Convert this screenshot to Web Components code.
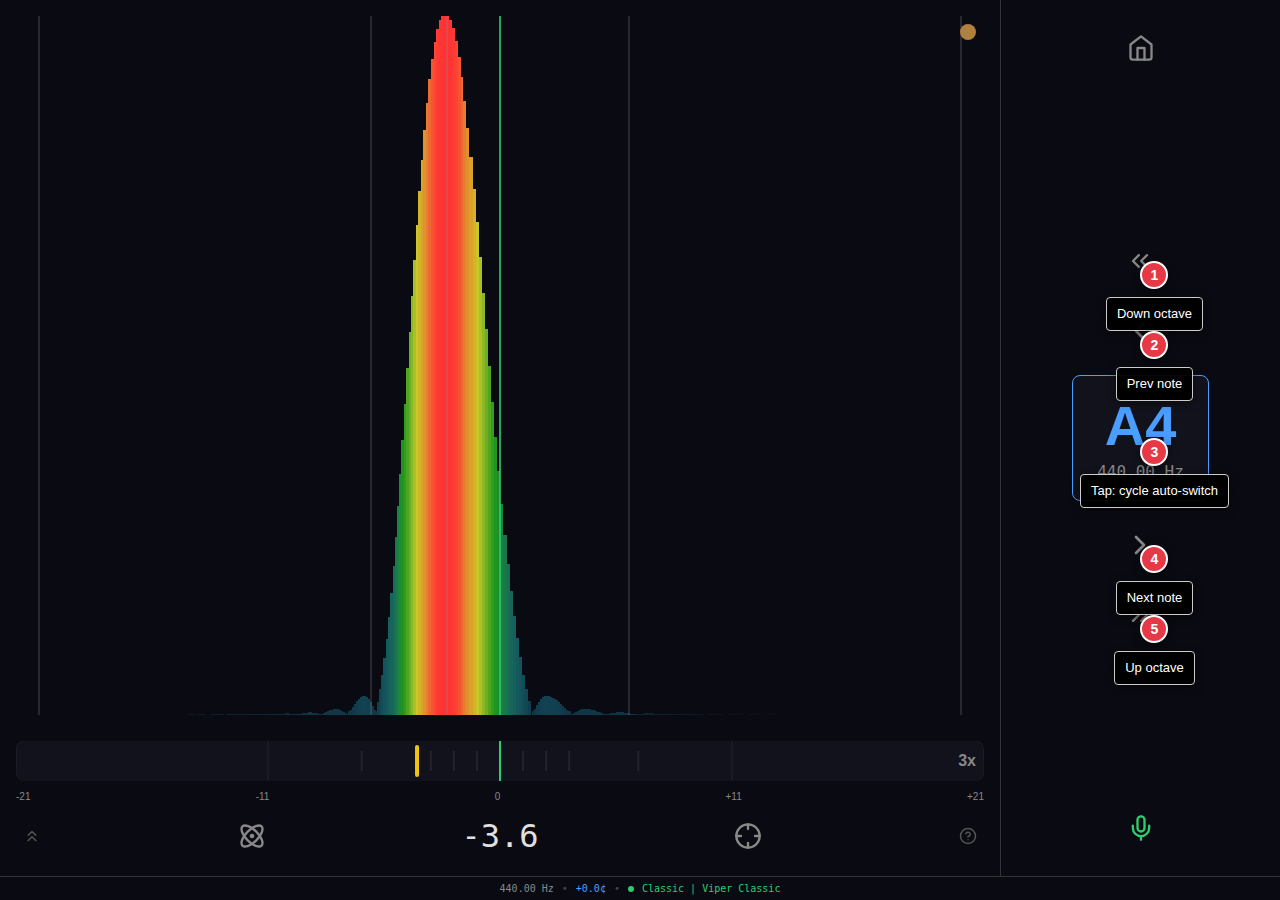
<!DOCTYPE html>
<html lang="en">
<head>
<meta charset="utf-8">
<meta name="viewport" content="width=device-width, initial-scale=1">
<title>Tuner</title>
<style>
  html, body { margin: 0; height: 100%; background: #0a0a12; }
  body { font-family: "Liberation Sans", Arial, sans-serif; color: #888; }
</style>
</head>
<body>
<tuner-app></tuner-app>

<script>
const define = (name, html, setup) => {
  const template = document.createElement('template');
  template.innerHTML = html;
  customElements.define(name, class extends HTMLElement {
    connectedCallback() {
      if (this.shadowRoot) return;
      const root = this.attachShadow({ mode: 'open' });
      root.append(template.content.cloneNode(true));
      if (setup) setup(this, root);
    }
  });
};

/* ---------- icons ---------- */
const ICONS = {
  home: '<path d="m3 9 9-7 9 7v11a2 2 0 0 1-2 2H5a2 2 0 0 1-2-2z"/><path d="M9 22V12h6v10"/>',
  mic: '<path d="M12 2a3 3 0 0 0-3 3v7a3 3 0 0 0 6 0V5a3 3 0 0 0-3-3Z"/><path d="M19 10v2a7 7 0 0 1-14 0v-2"/><path d="M12 19v3"/>',
  'chevron-left': '<path d="m15 18-6-6 6-6"/>',
  'chevron-right': '<path d="m9 18 6-6-6-6"/>',
  'chevrons-left': '<path d="m11 17-5-5 5-5"/><path d="m18 17-5-5 5-5"/>',
  'chevrons-right': '<path d="m6 17 5-5-5-5"/><path d="m13 17 5-5-5-5"/>',
  'chevrons-up': '<path d="m17 11-5-5-5 5"/><path d="m17 18-5-5-5 5"/>',
  atom: '<circle cx="12" cy="12" r="1"/><path d="M20.2 20.2c2.04-2.03.02-7.36-4.5-11.9-4.54-4.52-9.87-6.54-11.9-4.5-2.04 2.03-.02 7.36 4.5 11.9 4.54 4.52 9.87 6.54 11.9 4.5Z"/><path d="M15.7 15.7c4.52-4.54 6.54-9.87 4.5-11.9-2.03-2.04-7.36-.02-11.9 4.5-4.52 4.54-6.54 9.87-4.5 11.9 2.03 2.04 7.36.02 11.9-4.5Z"/>',
  crosshair: '<circle cx="12" cy="12" r="10"/><path d="M22 12h-4M6 12H2M12 6V2M12 22v-4"/>',
  help: '<circle cx="12" cy="12" r="10"/><path d="M9.09 9a3 3 0 0 1 5.83 1c0 2-3 3-3 3"/><path d="M12 17h.01"/>'
};

/* ---------- icon button: icon, size, label ---------- */
define('icon-button', `
  <style>
    :host { display: block; flex: none; width: var(--box, 56px); height: var(--box, 56px); }
    button { display: grid; place-items: center; width: 100%; height: 100%; margin: 0; padding: 0;
             border: 0; background: none; color: inherit; cursor: pointer; }
    svg { display: block; fill: none; stroke: currentColor; stroke-width: 2;
          stroke-linecap: round; stroke-linejoin: round; }
  </style>
  <button type="button"></button>`,
  (host, root) => {
    const size = host.getAttribute('size') || 28;
    const button = root.querySelector('button');
    button.setAttribute('aria-label', host.getAttribute('label'));
    button.innerHTML = `<svg viewBox="0 0 24 24" width="${size}" height="${size}" aria-hidden="true">${ICONS[host.getAttribute('icon')]}</svg>`;
  });

/* ---------- numbered help mark, anchored on the control it wraps ---------- */
define('help-mark', `
  <style>
    :host { display: block; position: relative; }
    .mark { position: absolute; left: 50%; top: 50%; width: 28px; margin: 0; pointer-events: none;
            display: flex; flex-direction: column; align-items: center; gap: 8px; z-index: 1; }
    .num { box-sizing: border-box; width: 28px; height: 28px; border: 2px solid #fff; border-radius: 50%;
           background: #e63946; color: #fff; font-weight: bold; font-size: 14px; line-height: 24px;
           text-align: center; box-shadow: 0 2px 8px rgba(0,0,0,.5); }
    .tip { padding: 8px 10px; border: 1px solid #ccc; border-radius: 4px; background: rgba(0,0,0,.95);
           color: #fff; font-size: 13px; line-height: 16px; white-space: nowrap;
           box-shadow: 0 2px 8px rgba(0,0,0,.5); }
  </style>
  <slot></slot>
  <div class="mark"><span class="num"></span><span class="tip"></span></div>`,
  (host, root) => {
    root.querySelector('.num').textContent = host.getAttribute('number');
    root.querySelector('.tip').textContent = host.getAttribute('text');
  });

/* ---------- spectrum ---------- */
const BASE = 699;
/* [edge x, bar top], from the outside in towards the peak */
const LEFT = [[361,702],[363,689],[365,675],[367,658],[370,639],[372,617],[374,593],[377,566],[379,537],
  [381,506],[383,474],[385,440],[388,404],[390,368],[393,332],[395,296],[397,260],[400,225],[402,191],
  [405,160],[407,130],[410,103],[412,79],[415,59],[418,42],[420,29],[423,20],[425,16]];
const RIGHT = [[515,701],[512,689],[509,675],[506,657],[503,638],[500,616],[497,591],[494,564],[491,535],
  [487,504],[484,471],[481,437],[478,402],[475,366],[472,329],[469,293],[466,257],[463,222],[460,189],
  [457,157],[453,128],[450,101],[447,77],[445,57],[442,41],[439,28],[436,20],[433,16]];
/* side lobes: start, end, top of the lobe, height */
const LOBES = [[171,178,174,1],[180,190,185,1],[194,208,200,1],[210,226,218,1],[226,244,235,1],[244,257,250,1.2],
  [257,280,272,1.6],[280,305,295,2.6],[305,332,320,6],[332,361,349,19],
  [516,555,530,19],[555,590,569,6],[590,620,603,2.8],[620,646,634,1.8],[646,668,656,1.2],
  [668,688,680,1],[692,708,699,1],[712,726,720,1],[732,742,737,1],[750,758,755,1]];
const STOPS = [[0,16,50,68],[.03,17,68,82],[.1,20,88,94],[.2,24,105,88],[.3,28,130,65],[.35,28,143,45],
  [.4,30,150,30],[.45,52,157,30],[.55,108,175,36],[.7,200,200,40],[.75,212,180,42],[.84,224,145,44],
  [.88,230,125,48],[.94,245,85,50],[.98,255,58,51],[1,255,51,51]];
const heat = h => {
  let i = 1;
  while (i < STOPS.length - 1 && h > STOPS[i][0]) i++;
  const a = STOPS[i - 1], b = STOPS[i], t = Math.min(1, (h - a[0]) / (b[0] - a[0]));
  return `rgb(${[1, 2, 3].map(k => Math.round(a[k] + (b[k] - a[k]) * t)).join(',')})`;
};
const bar = (x, w, h, o = 1) =>
  `<rect x="${x}" y="${BASE - h}" width="${w}" height="${h}" fill="${heat(h / BASE)}" opacity="${o}"/>`;
const drawBars = () => {
  let out = '';
  for (const [from, to, top, high] of LOBES) {
    for (let x = from; x < to; x += 2) {
      const m = x + 1;
      const t = m < top ? (m - from) / (top - from) : (to - m) / (to - top);
      const w = Math.min(2, to - x);
      const h = Math.max(high > 10 ? 4 : 1, Math.round(high * Math.sin(Math.max(0, t) * Math.PI / 2)));
      const far = Math.abs(m - 430);
      out += bar(x, w, h, high > 2 ? 1 : Math.max(.25, 1 - (far - 130) / 190));
    }
  }
  for (const [x, y] of LEFT) out += bar(x, 430 - x, BASE + 16 - y);
  for (const [x, y] of RIGHT) out += bar(429, x - 429, BASE + 16 - y);
  return out;
};

define('spectrum-view', `
  <style>
    :host { display: block; position: relative; min-height: 0; }
    svg { display: block; width: 100%; height: 100%; }
    .state { position: absolute; top: 8px; right: 8px; width: 16px; height: 16px; border-radius: 50%; background: #b08040; }
  </style>
  <svg viewBox="0 0 968 699" preserveAspectRatio="none" role="img" aria-label="Spectrum">
    <g class="bars"></g>
    <g fill="#888" fill-opacity=".24">
      <path d="M22 0h2v699h-2zM354 0h2v699h-2zM430 0h2v699h-2zM612 0h2v699h-2zM944 0h2v699h-2z"/>
    </g>
    <path d="M483 0h2v699h-2z" fill="#2ecc71" fill-opacity=".8"/>
  </svg>
  <span class="state"></span>`,
  (host, root) => { root.querySelector('.bars').innerHTML = drawBars(); });

/* ---------- cents bar ---------- */
define('cents-bar', `
  <style>
    :host { display: block; }
    .track { box-sizing: border-box; display: grid; align-items: center; height: 40px; border-radius: 8px;
             background: #12121c; box-shadow: inset 1px 0 #1b1b25, inset -1px 0 #1b1b25; overflow: hidden; }
    .track > * { grid-area: 1 / 1; }
    svg { display: block; width: 100%; height: 40px; }
    .zoom { justify-self: end; margin: 0 8px 0 0; padding: 0; border: 0; background: none; color: #888;
            font: bold 16px/20px "Liberation Sans", Arial, sans-serif; }
    .scale { display: flex; justify-content: space-between; margin-top: 8px; font-size: 10px; line-height: 15px; color: #888; }
  </style>
  <div class="track">
    <svg aria-hidden="true"><g transform="translate(-1 0)"></g></svg>
    <button class="zoom" type="button">3x</button>
  </div>
  <div class="scale"><span>-21</span><span>-11</span><span>0</span><span>+11</span><span>+21</span></div>`,
  (host, root) => {
    const at = cents => (50 + cents * 50 / 21) + '%';
    let out = '';
    for (const c of [-10.07, 10.07]) out += `<rect x="${at(c)}" width="2" height="40" fill="#1b1b25"/>`;
    for (const c of [-6, -3, -2, -1, 1, 2, 3, 6]) out += `<rect x="${at(c)}" y="10" width="2" height="20" fill="#23232d"/>`;
    out += `<rect x="${at(0)}" width="2" height="40" fill="#2ecc71"/>`;
    out += `<rect x="${at(Number(host.getAttribute('value')))}" y="4" width="4" height="32" rx="2" fill="#f1c40f" transform="translate(-1 0)"/>`;
    root.querySelector('g').innerHTML = out;
  });

/* ---------- control row ---------- */
define('control-row', `
  <style>
    :host { display: flex; align-items: center; justify-content: space-between; height: 48px; }
    .small { --box: 32px; color: #555; }
    .mid { --box: 44px; color: #888; }
    output { min-width: 89px; text-align: center; color: #e0e0e0;
             font: 32px/48px "DejaVu Sans Mono", monospace; }
  </style>
  <icon-button class="small" icon="chevrons-up" size="18" label="Expand"></icon-button>
  <icon-button class="mid" icon="atom" label="Mode"></icon-button>
  <output>-3.6</output>
  <icon-button class="mid" icon="crosshair" label="Calibrate"></icon-button>
  <icon-button class="small" icon="help" size="18" label="Help"></icon-button>`);

/* ---------- note card ---------- */
define('note-card', `
  <style>
    :host { display: block; }
    button { display: block; margin: 0; padding: 16px 24px; border: 1px solid #4a9eff; border-radius: 8px;
             background: #12121c; text-align: center; cursor: pointer; }
    .note { display: block; color: #4a9eff; font: bold 56px/68px "Liberation Sans", Arial, sans-serif; }
    .freq { display: block; color: #888; font: 16px/24px "DejaVu Sans Mono", monospace; }
  </style>
  <button type="button"><span class="note">A4</span><span class="freq">440.00 Hz</span></button>`);

/* ---------- side panel ---------- */
define('side-panel', `
  <style>
    :host { box-sizing: border-box; display: flex; flex-direction: column; align-items: center;
            justify-content: space-between; padding: 20px 0; border-left: 1px solid #333; color: #888; }
    nav { display: flex; flex-direction: column; align-items: center; gap: 16px; }
    .octave { --box: 52px; }
    .mic { color: #2ecc71; }
  </style>
  <icon-button icon="home" label="Home"></icon-button>
  <nav aria-label="Note">
    <help-mark number="1" text="Down octave"><icon-button class="octave" icon="chevrons-left" label="Down octave"></icon-button></help-mark>
    <help-mark number="2" text="Prev note"><icon-button icon="chevron-left" size="32" label="Previous note"></icon-button></help-mark>
    <help-mark number="3" text="Tap: cycle auto-switch"><note-card></note-card></help-mark>
    <help-mark number="4" text="Next note"><icon-button icon="chevron-right" size="32" label="Next note"></icon-button></help-mark>
    <help-mark number="5" text="Up octave"><icon-button class="octave" icon="chevrons-right" label="Up octave"></icon-button></help-mark>
  </nav>
  <icon-button class="mic" icon="mic" label="Microphone"></icon-button>`);

/* ---------- status bar ---------- */
define('status-bar', `
  <style>
    :host { box-sizing: border-box; display: flex; align-items: center; justify-content: center; gap: 8px;
            height: 24px; border-top: 1px solid #333; color: #888;
            font: 10px/12px "DejaVu Sans Mono", monospace; }
    .sep { color: #444; }
    .offset { color: #4a9eff; }
    .dot { width: 6px; height: 6px; border-radius: 50%; background: #2ecc71; }
    .profile { color: #2ecc71; }
  </style>
  <span>440.00 Hz</span><span class="sep">•</span><span class="offset">+0.0¢</span><span class="sep">•</span>
  <span class="dot"></span><span class="profile">Classic | Viper Classic</span>`);

/* ---------- page ---------- */
define('tuner-app', `
  <style>
    :host { display: grid; grid-template: minmax(0, 1fr) auto / minmax(0, 25fr) minmax(0, 7fr);
            min-height: 100vh; background: #0a0a12; }
    main { display: flex; flex-direction: column; padding: 16px; min-width: 0; }
    spectrum-view { flex: 1 1 0; }
    cents-bar { margin-top: 26px; }
    control-row { margin-top: 8px; }
    status-bar { grid-column: 1 / -1; }
  </style>
  <main>
    <spectrum-view></spectrum-view>
    <cents-bar value="-3.6"></cents-bar>
    <control-row></control-row>
  </main>
  <side-panel></side-panel>
  <status-bar></status-bar>`);
</script>
</body>
</html>
